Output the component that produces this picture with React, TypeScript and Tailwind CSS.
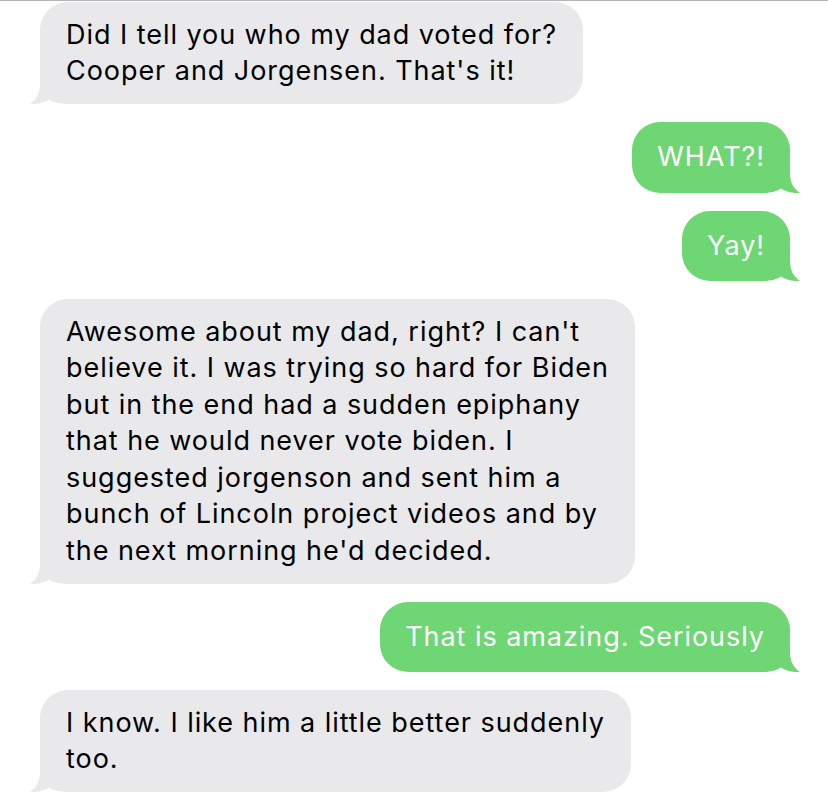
import React from "react";

const GRAY = "#e9e9eb";
const GREEN = "#6ed672";

function TailLeft() {
  return (
    <svg
      className="absolute left-[-10px] bottom-0"
      width="40"
      height="30"
      viewBox="0 0 40 30"
    >
      <path
        d="M10 0 L10 10 C10 20 6 26 0 30 C8 30.5 14 28.5 19 25.5 C24 29 31 30 40 30 L40 0 Z"
        fill={GRAY}
      />
    </svg>
  );
}

function TailRight() {
  return (
    <svg
      className="absolute right-[-10px] bottom-0"
      width="40"
      height="30"
      viewBox="0 0 40 30"
    >
      <path
        d="M30 0 L30 10 C30 20 34 26 40 30 C32 30.5 26 28.5 21 25.5 C16 29 9 30 0 30 L0 0 Z"
        fill={GREEN}
      />
    </svg>
  );
}

function Received({ lines }: { lines: string[] }) {
  return (
    <div className="flex justify-start pl-[40px]">
      <div className="relative rounded-[28px] bg-[#e9e9eb] px-[26px] py-[14.5px] text-black">
        <TailLeft />
        <div className="relative">
          {lines.map((l, i) => (
            <div key={i} className="whitespace-nowrap">
              {l}
            </div>
          ))}
        </div>
      </div>
    </div>
  );
}

function Sent({ text }: { text: string }) {
  return (
    <div className="flex justify-end pr-[38px]">
      <div className="relative rounded-[28px] bg-[#6ed672] px-[25px] py-[17px] text-white">
        <TailRight />
        <div className="relative whitespace-nowrap">{text}</div>
      </div>
    </div>
  );
}

export default function App() {
  return (
    <div
      className="w-[828px] h-[796px] overflow-hidden bg-white"
      style={{ fontFamily: "Inter, 'Liberation Sans', sans-serif" }}
    >
      <div className="h-px bg-[#b5b5b5]" />
      <div className="flex flex-col gap-[18px] pt-px text-[27px] leading-[36.5px] tracking-[0.95px]">
        <Received
          lines={[
            "Did I tell you who my dad voted for?",
            "Cooper and Jorgensen. That's it!",
          ]}
        />
        <Sent text="WHAT?!" />
        <Sent text="Yay!" />
        <Received
          lines={[
            "Awesome about my dad, right? I can't",
            "believe it. I was trying so hard for Biden",
            "but in the end had a sudden epiphany",
            "that he would never vote biden. I",
            "suggested jorgenson and sent him a",
            "bunch of Lincoln project videos and by",
            "the next morning he'd decided.",
          ]}
        />
        <Sent text="That is amazing. Seriously" />
        <Received
          lines={["I know. I like him a little better suddenly", "too."]}
        />
      </div>
    </div>
  );
}
